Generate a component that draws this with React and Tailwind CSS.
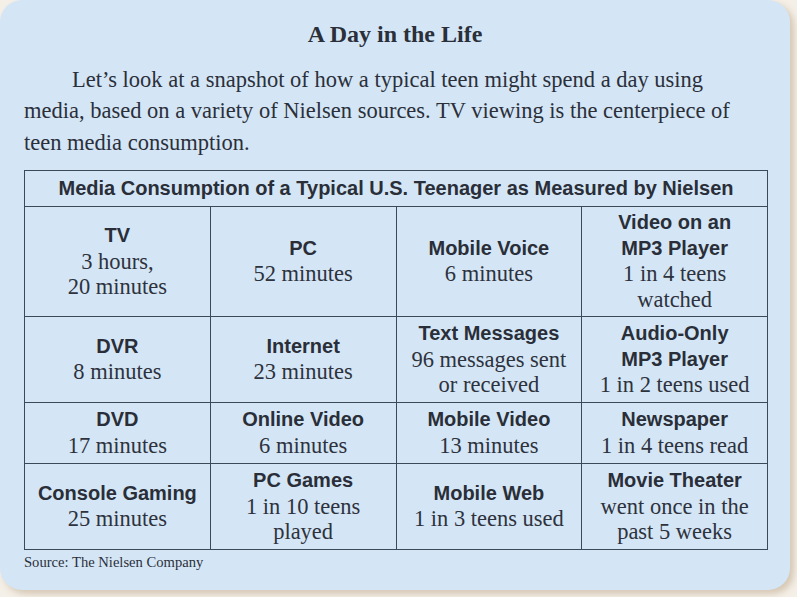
import React from "react";

const rows = [
  {
    h: "h-[110px]",
    cells: [
      { title: ["TV"], body: ["3 hours,", "20 minutes"] },
      { title: ["PC"], body: ["52 minutes"] },
      { title: ["Mobile Voice"], body: ["6 minutes"] },
      { title: ["Video on an", "MP3 Player"], body: ["1 in 4 teens", "watched"] },
    ],
  },
  {
    h: "h-[86px]",
    cells: [
      { title: ["DVR"], body: ["8 minutes"] },
      { title: ["Internet"], body: ["23 minutes"] },
      { title: ["Text Messages"], body: ["96 messages sent", "or received"] },
      { title: ["Audio-Only", "MP3 Player"], body: ["1 in 2 teens used"] },
    ],
  },
  {
    h: "h-[61px]",
    cells: [
      { title: ["DVD"], body: ["17 minutes"] },
      { title: ["Online Video"], body: ["6 minutes"] },
      { title: ["Mobile Video"], body: ["13 minutes"] },
      { title: ["Newspaper"], body: ["1 in 4 teens read"] },
    ],
  },
  {
    h: "h-[86px]",
    cells: [
      { title: ["Console Gaming"], body: ["25 minutes"] },
      { title: ["PC Games"], body: ["1 in 10 teens", "played"] },
      { title: ["Mobile Web"], body: ["1 in 3 teens used"] },
      { title: ["Movie Theater"], body: ["went once in the", "past 5 weeks"] },
    ],
  },
];

const Cell = ({ cell }) => (
  <td className="border-[1.5px] border-[#3c4a58] p-0 text-center align-middle">
    <div className="flex flex-col items-center leading-[25.5px]">
      {cell.title.map((t, i) => (
        <span
          key={"t" + i}
          className="whitespace-nowrap text-[20px] font-bold text-[#2a2e38] [font-family:'Liberation_Sans',Arial,sans-serif]"
        >
          {t}
        </span>
      ))}
      {cell.body.map((b, i) => (
        <span
          key={"b" + i}
          className="whitespace-nowrap text-[22.5px] text-[#2e323d] [font-family:'Liberation_Serif','Times_New_Roman',serif]"
        >
          {b}
        </span>
      ))}
    </div>
  </td>
);

export default function App() {
  return (
    <div className="w-[797px] h-[597px] bg-[#f4efe7] overflow-hidden">
      <div className="w-[790px] h-[590px] rounded-[22px] bg-[#d4e6f5] shadow-[4px_4px_6px_rgba(160,130,90,0.35)] px-[24px] pt-[19px] text-[#2b2f3a]">
        <h1 className="text-center text-[24px] leading-[30px] font-bold [font-family:'Liberation_Serif','Times_New_Roman',serif]">
          A Day in the Life
        </h1>

        <p className="mt-[15px] text-[22.5px] leading-[31.3px] whitespace-nowrap [font-family:'Liberation_Serif','Times_New_Roman',serif]">
          <span className="pl-[48px]">
            Let’s look at a snapshot of how a typical teen might spend a day using
          </span>
          <br />
          media, based on a variety of Nielsen sources. TV viewing is the centerpiece of
          <br />
          teen media consumption.
        </p>

        <table className="mt-[12px] w-[744px] border-collapse table-fixed">
          <thead>
            <tr className="h-[36px]">
              <th
                colSpan={4}
                className="border-[1.5px] border-[#3c4a58] p-0 text-center text-[20px] font-bold text-[#2a2e38] [font-family:'Liberation_Sans',Arial,sans-serif]"
              >
                Media Consumption of a Typical U.S. Teenager as Measured by Nielsen
              </th>
            </tr>
          </thead>
          <tbody>
            {rows.map((row, i) => (
              <tr key={i} className={row.h}>
                {row.cells.map((cell, j) => (
                  <Cell key={j} cell={cell} />
                ))}
              </tr>
            ))}
          </tbody>
        </table>

        <p className="mt-[2px] text-[14.6px] leading-[20px] [font-family:'Liberation_Serif','Times_New_Roman',serif]">
          Source: The Nielsen Company
        </p>
      </div>
    </div>
  );
}
